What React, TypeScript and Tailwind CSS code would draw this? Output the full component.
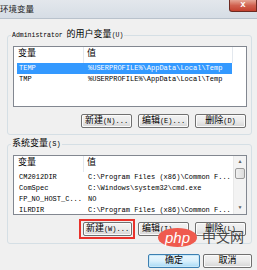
import React from "react";

const CJK = /([\u3000-\u9fff\uff00-\uffef]+)/;

// splits a label so Chinese runs get the larger size, latin stays small mono
const T = ({ s }: { s: string }) => (
  <>
    {s.split(CJK).map((p, i) =>
      CJK.test(p) ? (
        <span key={i} className="text-[9px]">
          {p}
        </span>
      ) : (
        <span key={i}>{p}</span>
      )
    )}
  </>
);

const Btn = ({ label, primary = false, w = "w-[51px]" }: { label: string; primary?: boolean; w?: string }) => (
  <div
    className={`${w} flex h-[14px] items-center justify-center rounded-[2px] border leading-[12px] text-black ${
      primary
        ? "border-[#3c7fb1] bg-linear-to-b from-[#eaf6fd] via-[#d9f0fc] to-[#a7d9f5] shadow-[inset_0_0_0_1px_#c8e8f8]"
        : "border-[#707070] bg-linear-to-b from-[#f2f2f2] via-[#ebebeb] to-[#d6d6d6] shadow-[inset_0_0_0_1px_#fbfbfb]"
    }`}
  >
    <T s={label} />
  </div>
);

const userVars = [
  { name: "TEMP", value: "%USERPROFILE%\\AppData\\Local\\Temp", sel: true },
  { name: "TMP", value: "%USERPROFILE%\\AppData\\Local\\Temp", sel: false },
];

const sysVars = [
  { name: "CM2012DIR", value: "C:\\Program Files (x86)\\Common F..." },
  { name: "ComSpec", value: "C:\\Windows\\system32\\cmd.exe" },
  { name: "FP_NO_HOST_C...", value: "NO" },
  { name: "ILRDIR", value: "C:\\Program Files (x86)\\Common F..." },
];

const Header = ({ extra = true }: { extra?: boolean }) => (
  <div className="flex h-[16px] shrink-0 items-center bg-white">
    <div className="flex h-full w-[70px] items-center border-r border-[#e3e8ee] pl-[4px]">
      <span className="text-[9px]">变量</span>
    </div>
    <div className={`flex h-full items-center pl-[3px] ${extra ? "w-[149px] border-r border-[#e3e8ee]" : "flex-1"}`}>
      <span className="text-[9px]">值</span>
    </div>
    {extra && <div className="flex-1" />}
  </div>
);

export default function App() {
  return (
    <div
      className="relative h-[270px] w-[257px] overflow-hidden bg-[#f0f0f0] text-[7px] text-black"
      style={{ fontFamily: '"Liberation Mono", "Noto Sans CJK SC", monospace' }}
    >
      {/* title bar */}
      <div className="flex h-[19px] items-start justify-between border-b border-[#b9c2cc] bg-linear-to-b from-[#e3e7ec] to-[#d6dde5]">
        <div className="pt-[3px] text-[8.5px] leading-[11px] text-[#1b1b1b]" style={{ fontFamily: '"Noto Sans CJK SC", sans-serif' }}>
          环境变量
        </div>
        <div className="flex h-[12px] w-[28px] items-center justify-center rounded-bl-[3px] border border-t-0 border-[#6d2a22] bg-linear-to-b from-[#e5a696] via-[#d0614f] to-[#c4402e] text-[9px] font-bold leading-none text-white">
          x
        </div>
      </div>

      <div className="pl-[7px] pr-[5px]">
        {/* user variables */}
        <fieldset className="mt-[11px] rounded-[3px] border border-[#d5dfe5] pb-[6px] pl-[5px] pr-[4px] pt-[5px]">
          <legend className="-ml-[2px] px-[1px] text-[6.5px] leading-[10px]">
            <T s="Administrator 的用户变量(U)" />
          </legend>
          <div className="flex h-[61px] flex-col border border-[#828790] bg-white">
            <Header />
            {userVars.map((r) => (
              <div
                key={r.name}
                className={`ml-[3px] flex h-[11px] w-[215px] items-center leading-[11px] ${r.sel ? "bg-[#3399ff] text-white" : ""}`}
              >
                <div className="w-[69px] pl-[2px]">{r.name}</div>
                <div className="pl-[2px]">{r.value}</div>
              </div>
            ))}
          </div>
          <div className="mt-[7px] flex justify-end gap-[6px] pr-[1px]">
            <Btn label="新建(N)..." />
            <Btn label="编辑(E)..." />
            <Btn label="删除(D)" />
          </div>
        </fieldset>

        {/* system variables */}
        <fieldset className="mt-[4px] rounded-[3px] border border-[#d5dfe5] pb-[7px] pl-[5px] pr-[4px] pt-[6px]">
          <legend className="-ml-[2px] px-[1px] text-[7px] leading-[10px]">
            <T s="系统变量(S)" />
          </legend>
          <div className="flex h-[60px] border border-[#828790] bg-white">
            <div className="flex flex-1 flex-col overflow-hidden">
              <Header extra={false} />
              {sysVars.map((r) => (
                <div key={r.name} className="ml-[3px] flex h-[11px] shrink-0 items-center leading-[11px]">
                  <div className="w-[69px] pl-[2px]">{r.name}</div>
                  <div className="whitespace-nowrap pl-[2px]">{r.value}</div>
                </div>
              ))}
            </div>
            {/* scrollbar */}
            <div className="flex w-[13px] flex-col border-l border-[#e9e9e9] bg-[#f3f3f3]">
              <div className="flex h-[12px] items-center justify-center text-[5px] leading-none text-[#606060]">▲</div>
              <div className="mx-[1px] h-[11px] rounded-[2px] border border-[#9a9a9a] bg-linear-to-r from-[#f1f1f1] to-[#dcdcdc]" />
              <div className="flex-1" />
              <div className="flex h-[12px] items-center justify-center text-[5px] leading-none text-[#606060]">▼</div>
            </div>
          </div>
          <div className="mt-[7px] flex justify-end gap-[6px] pr-[1px]">
            <div className="relative">
              <Btn label="新建(W)..." w="w-[49px]" />
              <div className="absolute -bottom-[3px] -left-[4px] -right-[3px] -top-[3px] border-2 border-[#e8322b]" />
            </div>
            <Btn label="编辑(I)..." />
            <Btn label="删除(L)" />
          </div>
        </fieldset>

        <div className="mt-[10px] flex justify-end gap-[3px]">
          <Btn label="确定" primary w="w-[52px]" />
          <Btn label="取消" w="w-[49px]" />
        </div>
      </div>

      {/* watermark */}
      <div className="absolute left-[158px] top-[228px] flex h-[19px] w-[39px] items-center justify-center rounded-[50%] bg-[#ef5a4e]">
        <span className="text-[15px] italic leading-none text-white" style={{ fontFamily: '"Liberation Sans", sans-serif' }}>
          php
        </span>
      </div>
      <div
        className="absolute left-[202px] top-[226px] text-[14px] leading-[20px] text-[#333333]/90"
        style={{ fontFamily: '"Noto Sans CJK SC", sans-serif' }}
      >
        中文网
      </div>
    </div>
  );
}
